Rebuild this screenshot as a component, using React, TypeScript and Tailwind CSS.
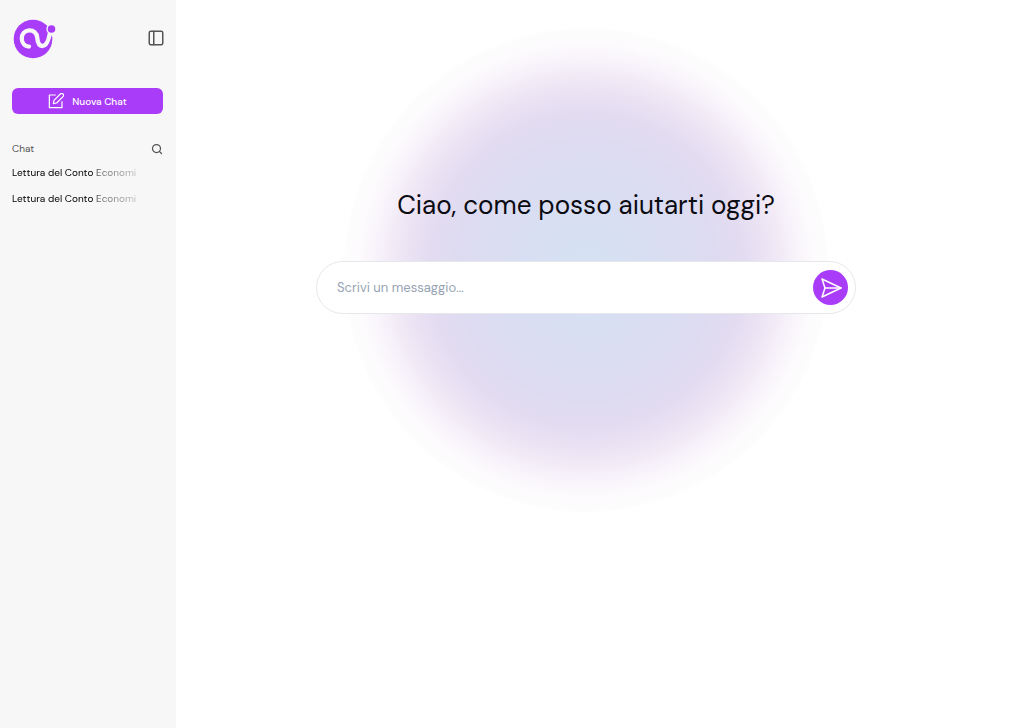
import { PanelLeft, Search } from "lucide-react";

type Chat = {
  id: number;
  title: string;
};

const chats: Chat[] = [
  { id: 1, title: "Lettura del Conto Economi" },
  { id: 2, title: "Lettura del Conto Economi" },
];

const Logo = () => {
  return (
    <svg
      xmlns="http://www.w3.org/2000/svg"
      width="44"
      height="42"
      viewBox="0 0 44 42"
      fill="none"
      role="img"
      aria-label="Logo"
    >
      <circle cx="21" cy="21" r="19.300" fill="#a93cf8" />
      <path
        d="M17 28.500C12.500 28.500 9.800 24.500 9.800 20.500A7.700 7.700 0 0 1 25.200 19.500C25.500 23 26 28 30.300 28C34.500 28 36.500 22.500 37.500 17"
        stroke="#f7f7f7"
        strokeWidth="4.300"
        strokeLinecap="round"
      />
      <circle cx="17.300" cy="21.500" r="4.900" fill="#a93cf8" />
      <path d="M35.500 8h7l-2.500 10-4 3z" fill="#f7f7f7" />
      <path d="M31 31.500C36.500 29 38.500 23 40 17C41 25 37.500 32 31 37z" fill="#a93cf8" />
      <circle cx="39.500" cy="11" r="5.200" fill="#f7f7f7" />
      <circle cx="39.500" cy="11" r="3.800" fill="#a93cf8" />
    </svg>
  );
};

const EditIcon = () => {
  return (
    <svg
      xmlns="http://www.w3.org/2000/svg"
      width="16"
      height="16"
      viewBox="0 0 24 24"
      fill="none"
      stroke="currentColor"
      strokeWidth="1.800"
      strokeLinecap="round"
      strokeLinejoin="round"
      aria-hidden="true"
    >
      <path d="M11 3H2v19h19v-9" />
      <path d="M8 16l1-5L18.500 1.500a2.500 2.500 0 0 1 4 4L13 15z" />
    </svg>
  );
};

const SendIcon = () => {
  return (
    <svg
      xmlns="http://www.w3.org/2000/svg"
      width="22"
      height="22"
      viewBox="0 0 22 22"
      fill="none"
      stroke="currentColor"
      strokeWidth="1.500"
      strokeLinecap="round"
      strokeLinejoin="round"
      aria-hidden="true"
    >
      <path d="M2 2L21 11L2 20L5 11z" />
      <path d="M5 11h16" />
    </svg>
  );
};

const Sidebar = () => {
  return (
    <aside className="w-44 shrink-0 bg-[#f7f7f7] pl-3 pr-[13px] pt-[18px]">
      <div className="flex items-start justify-between">
        <a href="#" aria-label="Home">
          <Logo />
        </a>
        <button
          type="button"
          aria-label="Chiudi barra laterale"
          className="-mr-0.5 mt-[11px] text-[#555]"
        >
          <PanelLeft size={18} strokeWidth={2} />
        </button>
      </div>

      <button
        type="button"
        className="mt-7 flex h-[26px] w-full items-center justify-center gap-2 rounded-md bg-[#a93cf8] text-[10px] font-medium text-white"
      >
        <EditIcon />
        Nuova Chat
      </button>

      <div className="mt-[27px] flex items-center justify-between text-[#555]">
        <h2 className="text-[10px] leading-4">Chat</h2>
        <button type="button" aria-label="Cerca chat">
          <Search size={12} strokeWidth={2.5} />
        </button>
      </div>

      <nav className="mt-[5px] flex flex-col">
        {chats.map((chat) => {
          return (
            <a
              key={chat.id}
              href="#"
              className="mb-1 w-fit whitespace-nowrap py-1 text-[10px] leading-[14px] text-black [mask-image:linear-gradient(to_right,#000_82px,#0009_86px,#0003_125px)]"
            >
              {chat.title}
            </a>
          );
        })}
      </nav>
    </aside>
  );
};

const App = () => {
  return (
    <div className="flex min-h-screen bg-white font-['DM_Sans',Inter,sans-serif]">
      <Sidebar />

      <main className="mr-7 flex min-w-0 flex-1 flex-col items-center">
        <div className="relative flex w-full flex-col items-center px-6 pt-[185px]">
          {/* soft glow behind the prompt */}
          <div className="absolute left-1/2 top-7 size-[484px] -translate-x-1/2 rounded-full bg-[radial-gradient(closest-side,#d5e2f4_0%,#d9def3_30%,#dedbf1_54%,#e4dcf1_66%,#efe7f5_78%,#f7f2fa_86%,#fdfbfd_94%,#fdfdfd_100%)]"></div>

          <h1 className="relative text-center text-[26px] font-[450] leading-10 text-[#0b0b12]">
            Ciao, come posso aiutarti oggi?
          </h1>

          <form
            onSubmit={(e) => e.preventDefault()}
            className="relative mt-9 flex w-full max-w-[540px] items-center rounded-full border border-gray-200 bg-white py-2 pl-5 pr-[7px]"
          >
            <input
              type="text"
              aria-label="Messaggio"
              placeholder="Scrivi un messaggio..."
              className="min-w-0 flex-1 bg-transparent text-[13px] text-gray-900 outline-none placeholder:text-[#96a3b3]"
            />
            <button
              type="submit"
              aria-label="Invia"
              className="flex size-[35px] items-center justify-center rounded-full bg-[#a93cf8] text-white"
            >
              <SendIcon />
            </button>
          </form>
        </div>
      </main>
    </div>
  );
};

export default App;
